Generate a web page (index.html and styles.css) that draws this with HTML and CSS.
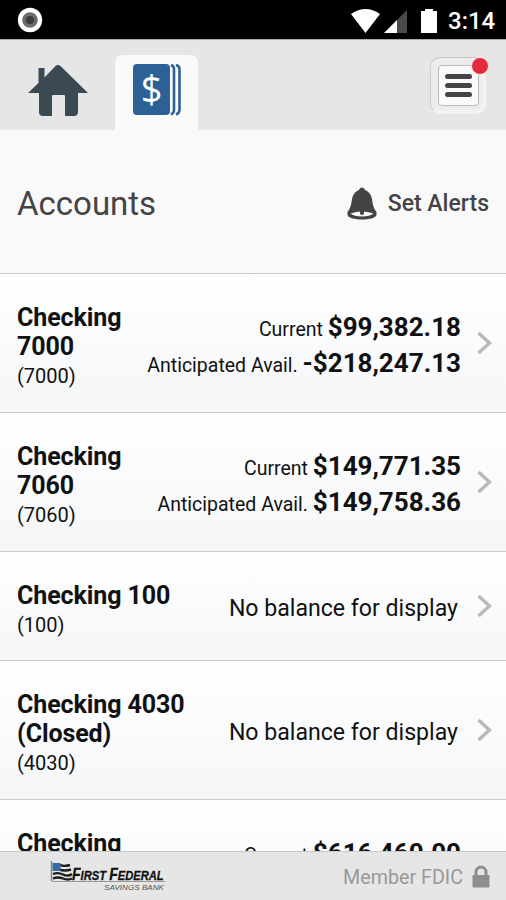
FILE: index.html
```html
<!doctype html>
<html lang="en">
<head>
	<meta charset="UTF-8">
	<title>Accounts</title>
	<link rel="stylesheet" href="styles.css">
</head>
<body>
	<div class="status">
		<svg class="record" viewBox="0 0 26 26" width="26" height="26"><circle cx="13" cy="13" r="12.2" fill="#fff"/><circle cx="13" cy="13" r="7.8" fill="#6c6c6c"/><circle cx="13" cy="13" r="4" fill="#3c3c3c"/></svg>
		<svg class="signals" viewBox="0 0 88 26" width="88" height="26">
			<path d="M0 6Q14.500 -4 29 6L14.500 25Z" fill="#fff"/>
			<path d="M56 2V25H46V12Z" fill="#4a4a4a"/>
			<path d="M33 25L46 12V25Z" fill="#fff"/>
			<path d="M70 3H74V1H82V3H86V25H70Z" fill="#fff"/>
		</svg>
		<span class="clock">3:14</span>
	</div>

	<div class="nav">
		<a class="home">
			<svg viewBox="0 0 60 54" width="60" height="54" fill="#3b4953"><path d="M0 30L10.500 20V5H16.500V14.500L27.500 3Q30 1 32.500 3L60 30H50V49Q50 53 46 53H37V33Q37 32 36 32H25Q24 32 24 33V53H15Q11 53 11 49V30Z"/></svg>
		</a>
		<a class="tab on">
			<svg viewBox="0 0 48 52" width="48" height="52">
				<rect x="0" y="0" width="37" height="51" rx="4" fill="#2c6196"/>
				<path d="M38 1Q41 2 41 5V46Q41 49 38 50.500M43 1Q46.500 2 46.500 5V46Q46.500 49 43 50.500" fill="none" stroke="#2c6196" stroke-width="2.600"/>
				<text class="dollar" x="18.500" y="39" text-anchor="middle">$</text>
			</svg>
		</a>
		<a class="menu">
			<span class="menu-face"><i></i><i></i><i></i></span>
			<b class="dot"></b>
		</a>
	</div>

	<div class="title">
		<h1>Accounts</h1>
		<a class="alerts">
			<svg viewBox="0 0 30 34" width="30" height="34">
				<path d="M15 0.500Q17.500 0.500 18 3Q23.500 5 25 12C25.800 18 26.500 21 29.500 25V28C28 34 2 34 0.500 28V25C3.500 21 4.200 18 5 12Q6.500 5 12 3Q12.500 0.500 15 0.500Z" fill="#444"/>
				<path d="M3.500 26.500Q15 22.500 26.500 26.500Q23 29.500 15 29.500T3.500 26.500Z" fill="#f8f8f8"/>
				<path d="M13 23H17V26A2 2 0 0 1 13 26Z" fill="#444"/>
			</svg>
			<span>Set Alerts</span>
		</a>
	</div>

	<ul class="list">
		<li>
			<div class="name"><b>Checking 7000</b><span>(7000)</span></div>
			<div class="money">
				<p>Current <b>$99,382.18</b></p>
				<p>Anticipated Avail. <b>-$218,247.13</b></p>
			</div>
			<svg class="arrow" viewBox="0 0 15 24" width="15" height="24"><path d="M1.500 2L12.500 12L1.500 22"/></svg>
		</li>
		<li>
			<div class="name"><b>Checking 7060</b><span>(7060)</span></div>
			<div class="money">
				<p>Current <b>$149,771.35</b></p>
				<p>Anticipated Avail. <b>$149,758.36</b></p>
			</div>
			<svg class="arrow" viewBox="0 0 15 24" width="15" height="24"><path d="M1.500 2L12.500 12L1.500 22"/></svg>
		</li>
		<li class="short">
			<div class="name wide"><b>Checking 100</b><span>(100)</span></div>
			<div class="money none">No balance for display</div>
			<svg class="arrow" viewBox="0 0 15 24" width="15" height="24"><path d="M1.500 2L12.500 12L1.500 22"/></svg>
		</li>
		<li>
			<div class="name wide"><b>Checking 4030 (Closed)</b><span>(4030)</span></div>
			<div class="money none">No balance for display</div>
			<svg class="arrow" viewBox="0 0 15 24" width="15" height="24"><path d="M1.500 2L12.500 12L1.500 22"/></svg>
		</li>
		<li>
			<div class="name"><b>Checking</b></div>
			<div class="money">
				<p>Current <b>$616,460.00</b></p>
				<p>&nbsp;</p>
			</div>
			<svg class="arrow" viewBox="0 0 15 24" width="15" height="24"><path d="M1.500 2L12.500 12L1.500 22"/></svg>
		</li>
	</ul>

	<div class="footer">
		<svg class="logo" viewBox="0 0 116 30" width="116" height="30">
			<path d="M1.500 0V20" stroke="#888" stroke-width="1.500"/>
			<path d="M2 20.500H115" stroke="#999" stroke-width="1.200"/>
			<path d="M9 3.500Q14 6 20 4M9 8.500Q15 10.500 21 8.500M3 13Q8 11 13 13.500T22 13M3 17.500Q8 15.500 13 17.500T22 17.500" fill="none" stroke="#1c1c1c" stroke-width="2.400"/>
			<rect x="2.500" y="2" width="8" height="8" fill="#376da6"/>
			<text class="bank" transform="translate(22 18.500) scale(0.880 1)"><tspan class="cap">F</tspan>IRST <tspan class="cap">F</tspan>EDERAL</text>
			<text class="savings" x="54" y="28.500" textLength="60" lengthAdjust="spacingAndGlyphs">SAVINGS BANK</text>
		</svg>
		<div class="fdic">
			<span>Member FDIC</span>
			<svg viewBox="0 0 18 23" width="18" height="23"><path d="M4 11V7A5 5 0 0 1 14 7V11" fill="none" stroke="#8e8e8e" stroke-width="3"/><rect x="0.500" y="10" width="17" height="12.500" rx="1" fill="#8e8e8e"/></svg>
		</div>
	</div>
</body>
</html>
```
FILE: styles.css
```css
body,ul,li,h1,p{margin:0;padding:0;}
ul{list-style:none;}
svg{display:block;flex:none;}
body{display:flex;flex-direction:column;height:900px;overflow:hidden;background:#fff;color:#111;font-family:Roboto,"Liberation Sans",sans-serif;}

.status{flex:none;display:flex;align-items:center;box-sizing:border-box;height:40px;padding:2px 12px 0 17px;background:#000;border-bottom:1px solid #aaa;}
.record{margin-bottom:2px;}
.signals{margin:0 9px 0 auto;}
.clock{width:46px;color:#fff;font-size:24px;font-weight:500;line-height:38px;white-space:nowrap;}

.nav{flex:none;display:flex;align-items:flex-start;box-sizing:border-box;height:90px;padding:15px 20px 0 28px;background:#e6e6e6;}
.home{padding-top:8px;}
.tab{box-sizing:border-box;width:83px;height:75px;margin-left:27px;padding:9px 0 0 18px;border-radius:8px 8px 0 0;}
.tab.on{background:#fafafa;}
.dollar{fill:#fff;font-family:"Open Sans",sans-serif;font-size:38px;}

.menu{position:relative;box-sizing:border-box;width:56px;height:57px;margin:2px 0 0 auto;padding:7px;border:1px solid #f1f1f1;border-top-color:#c4c4c4;border-left-color:#cfcfcf;border-radius:10px;background:#ececec;box-shadow:inset -2px -2px 2px #f6f6f6;}
.menu-face{display:flex;flex-direction:column;justify-content:center;align-items:center;gap:4px;box-sizing:border-box;width:41px;height:41px;border:1px solid #bbb;border-radius:4px;background:#fafafa;}
.menu-face i{width:27px;height:5px;border-radius:3px;background:#444;}
.dot{position:absolute;top:-1px;right:-4px;width:16px;height:16px;border:1px solid #fbeaea;border-radius:50%;background:#e5293c;}

.title{flex:none;display:flex;justify-content:space-between;align-items:center;box-sizing:border-box;height:144px;padding:4px 17px 0;border-bottom:1px solid #c9c9c9;background:#f9f9f9;color:#444;}
.title h1{font-size:33px;font-weight:400;}
.alerts{display:flex;align-items:center;gap:11px;font-size:23px;font-weight:500;}

.list{flex:1;min-height:0;overflow:hidden;}
.list li{display:flex;align-items:center;box-sizing:border-box;height:139px;padding-right:14px;border-bottom:1px solid #c9cacb;background:linear-gradient(#fff,#f4f6f8);}
.list li.short{height:109px;}
.name{align-self:flex-start;width:118px;padding:29px 0 0 17px;line-height:29px;}
.name.wide{width:190px;}
.name b{display:block;font-size:25px;font-weight:700;letter-spacing:-0.100px;}
.name span{display:block;padding-top:1px;font-size:20px;}
.money{flex:1;padding:10px 16px 0 0;font-size:19.500px;line-height:36px;text-align:right;white-space:nowrap;}
.money p{height:36px;}
.money b{font-size:26px;font-weight:700;line-height:30px;}
.money.none{padding:6px 19px 0 0;font-size:23.100px;}
.arrow path{fill:none;stroke:#b9b9b9;stroke-width:3.500;}

.footer{flex:none;display:flex;justify-content:space-between;align-items:center;box-sizing:border-box;height:49px;padding:0 16px 0 50px;border-top:1px solid #c8c8c8;background:#e6e6e6;}
.bank{fill:#111;stroke:#111;stroke-width:0.3;font-family:"Liberation Sans",sans-serif;font-size:12.700px;font-weight:700;font-style:italic;}
.bank .cap{font-size:16px;}
.savings{fill:#555;font-family:"Liberation Sans",sans-serif;font-size:8px;font-style:italic;}
.fdic{display:flex;align-items:center;gap:9px;color:#999;font-size:19.700px;}
.fdic span{padding-top:2px;}
```
